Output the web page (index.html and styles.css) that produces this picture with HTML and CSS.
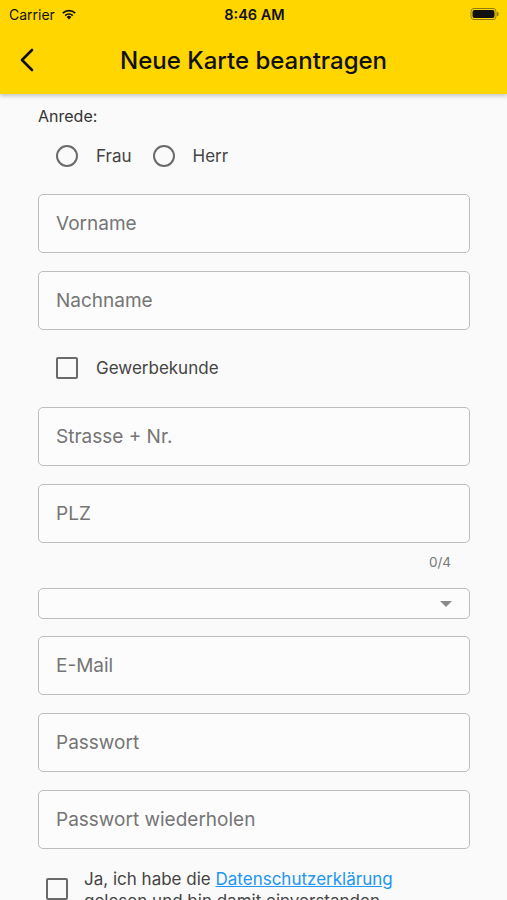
FILE: index.html
```html
<!DOCTYPE html>
<html lang="de">
<head>
<meta charset="utf-8">
<link rel="stylesheet" href="styles.css">
</head>
<body>
<header class="top">
  <div class="status">
    <div class="status-left">Carrier
      <svg class="wifi" width="16" height="12" viewBox="0 0 16 12"><path d="M8 11.5 L5.6 9 A3.4 3.4 0 0 1 10.4 9 Z" fill="#111"/><path d="M3.6 7 A6.2 6.2 0 0 1 12.4 7 L11.2 8.2 A4.5 4.5 0 0 0 4.8 8.2 Z" fill="#111"/><path d="M1.2 4.6 A9.6 9.6 0 0 1 14.8 4.6 L13.6 5.8 A7.9 7.9 0 0 0 2.4 5.8 Z" fill="#111"/></svg>
    </div>
    <div class="status-time">8:46 AM</div>
    <div class="status-right">
      <svg width="30" height="14" viewBox="0 0 30 14"><rect x="1" y="1.5" width="25" height="11" rx="3" fill="none" stroke="#8a7a10" stroke-width="1"/><rect x="2.5" y="3" width="22" height="8" rx="2" fill="#111"/><rect x="27" y="5" width="1.5" height="4" rx="0.7" fill="#8a7a10"/></svg>
    </div>
  </div>
  <div class="appbar">
    <svg class="back" width="16" height="24" viewBox="0 0 16 24"><path d="M13 2 L3 12 L13 22" fill="none" stroke="#111" stroke-width="2.6" stroke-linecap="round" stroke-linejoin="round"/></svg>
    <h1 class="title">Neue Karte beantragen</h1>
  </div>
</header>
<main class="form">
  <div class="label">Anrede:</div>
  <div class="radio-row">
    <span class="radio"></span><span class="opt">Frau</span>
    <span class="radio"></span><span class="opt">Herr</span>
  </div>
  <div class="field">Vorname</div>
  <div class="field">Nachname</div>
  <div class="check-row"><span class="box"></span><span class="opt">Gewerbekunde</span></div>
  <div class="field f2">Strasse + Nr.</div>
  <div class="field">PLZ</div>
  <div class="counter">0/4</div>
  <div class="select"><span class="arrow"></span></div>
  <div class="field f3">E-Mail</div>
  <div class="field">Passwort</div>
  <div class="field">Passwort wiederholen</div>
  <div class="consent">
    <span class="box box2"></span>
    <p class="consent-text">Ja, ich habe die <a class="link" href="#">Datenschutzerklärung</a> gelesen und bin damit einverstanden.</p>
  </div>
</main>
</body>
</html>
```
FILE: styles.css
```css
html, body { margin: 0; padding: 0; }
body {
  background: #fafafa;
  font-family: Inter, Roboto, "Liberation Sans", sans-serif;
  width: 507px;
  height: 900px;
  overflow: hidden;
}
.top {
  background: #ffd600;
  box-shadow: 0 2px 4px rgba(0,0,0,0.22);
  position: relative;
  z-index: 1;
}
.status {
  height: 28px;
  display: flex;
  align-items: center;
  justify-content: space-between;
  padding: 0 7px 0 9px;
  font-size: 14px;
  color: #111;
}
.status-left { display: flex; align-items: center; gap: 6px; width: 120px; }
.wifi { margin-top: -1px; }
.status-time { font-weight: 600; font-size: 14.5px; }
.status-right { width: 120px; display: flex; justify-content: flex-end; }
.appbar {
  height: 66px;
  display: flex;
  align-items: center;
  padding-left: 19px;
}
.back { margin-top: -2px; }
.title {
  margin: -2px 0 0 85px;
  font-size: 24px;
  font-weight: 500;
  color: #111;
}
.form {
  padding: 12px 37px 0 38px;
}
.label {
  font-size: 16px;
  line-height: 20px;
  color: #333;
}
.radio-row {
  height: 40px;
  margin-top: 10px;
  display: flex;
  align-items: center;
  padding-left: 18px;
}
.radio {
  width: 18px;
  height: 18px;
  border: 2px solid #6a6a6a;
  border-radius: 50%;
  flex: none;
}
.opt {
  font-size: 17px;
  color: #444;
  margin-left: 18px;
  margin-right: 21px;
}
.field {
  height: 59px;
  box-sizing: border-box;
  border: 1.5px solid #bdbdbd;
  border-radius: 5px;
  margin-top: 18px;
  display: flex;
  align-items: center;
  padding-left: 17px;
  font-size: 19px;
  color: #757575;
  background: #fcfcfc;
}
.check-row {
  height: 40px;
  margin-top: 18px;
  display: flex;
  align-items: center;
  padding-left: 18px;
}
.box {
  width: 18px;
  height: 18px;
  border: 2px solid #6a6a6a;
  border-radius: 2px;
  flex: none;
}
.f2 { margin-top: 19px; }
.counter {
  margin-top: 9px;
  height: 20px;
  line-height: 20px;
  text-align: right;
  padding-right: 19px;
  font-size: 13.5px;
  color: #777;
}
.select {
  margin-top: 16px;
  height: 31px;
  box-sizing: border-box;
  border: 1.5px solid #bdbdbd;
  border-radius: 5px;
  display: flex;
  align-items: center;
  justify-content: flex-end;
  padding-right: 17px;
  background: #fcfcfc;
}
.arrow {
  width: 0;
  height: 0;
  border-left: 6px solid transparent;
  border-right: 6px solid transparent;
  border-top: 6px solid #8a8a8a;
}
.f3 { margin-top: 17px; }
.consent {
  margin-top: 19px;
  display: flex;
  align-items: flex-start;
  padding-left: 8px;
}
.box2 { margin-top: 10px; }
.consent-text {
  margin: 0 0 0 16px;
  max-width: 330px;
  font-size: 17px;
  line-height: 22px;
  color: #444;
}
.link { color: #2196f3; text-decoration: underline; }
```
